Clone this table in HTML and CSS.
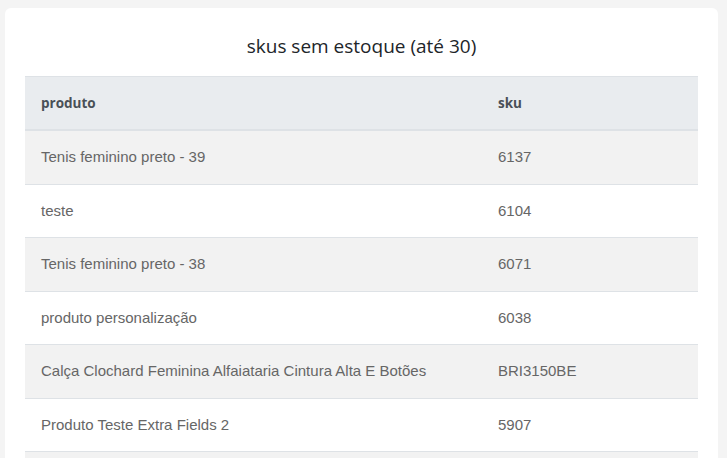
FILE: index.html
```html
<!DOCTYPE html>
<html lang="pt-BR">
<head>
<meta charset="utf-8">
<link rel="stylesheet" href="styles.css">
</head>
<body>
<div class="card">
  <h2 class="title">skus sem estoque (até 30)</h2>
  <table class="tbl">
    <thead>
      <tr><th class="c-prod">produto</th><th class="c-sku">sku</th></tr>
    </thead>
    <tbody>
      <tr><td>Tenis feminino preto - 39</td><td>6137</td></tr>
      <tr><td>teste</td><td>6104</td></tr>
      <tr><td>Tenis feminino preto - 38</td><td>6071</td></tr>
      <tr><td>produto personalização</td><td>6038</td></tr>
      <tr><td>Calça Clochard Feminina Alfaiataria Cintura Alta E Botões</td><td>BRI3150BE</td></tr>
      <tr><td>Produto Teste Extra Fields 2</td><td>5907</td></tr>
      <tr><td>&nbsp;</td><td>&nbsp;</td></tr>
    </tbody>
  </table>
</div>
</body>
</html>
```

FILE: styles.css
```css
html, body {
  margin: 0;
  padding: 0;
  background: #f4f4f4;
  height: 458px;
  overflow: hidden;
}
body {
  padding: 8px 9px 0 5px;
}
.card {
  background: #fff;
  border-radius: 6px;
  padding: 20px 20px 20px 20px;
  min-height: 600px;
}
.title {
  margin: 0 0 12px 0;
  text-align: center;
  font-family: "Open Sans", "Noto Sans", sans-serif;
  font-weight: 400;
  font-size: 19px;
  line-height: 36px;
  color: #212529;
}
.tbl {
  width: 100%;
  border-collapse: collapse;
}
.tbl th {
  text-align: left;
  font-family: "Open Sans", "Noto Sans", sans-serif;
  font-weight: 700;
  font-size: 13.5px;
  color: #495057;
  background: #e9ecef;
  padding: 16px 16px;
  line-height: 20px;
  border-top: 1px solid #dee2e6;
  border-bottom: 2px solid #dee2e6;
}
.tbl td {
  font-family: "Liberation Sans", Arial, sans-serif;
  font-size: 15px;
  color: #666;
  padding: 16px 16px;
  line-height: 20.5px;
  border-top: 1px solid #dee2e6;
}
.tbl tbody tr:nth-child(odd) td {
  background: #f2f2f2;
}
.c-sku {
  width: 184px;
}
```
